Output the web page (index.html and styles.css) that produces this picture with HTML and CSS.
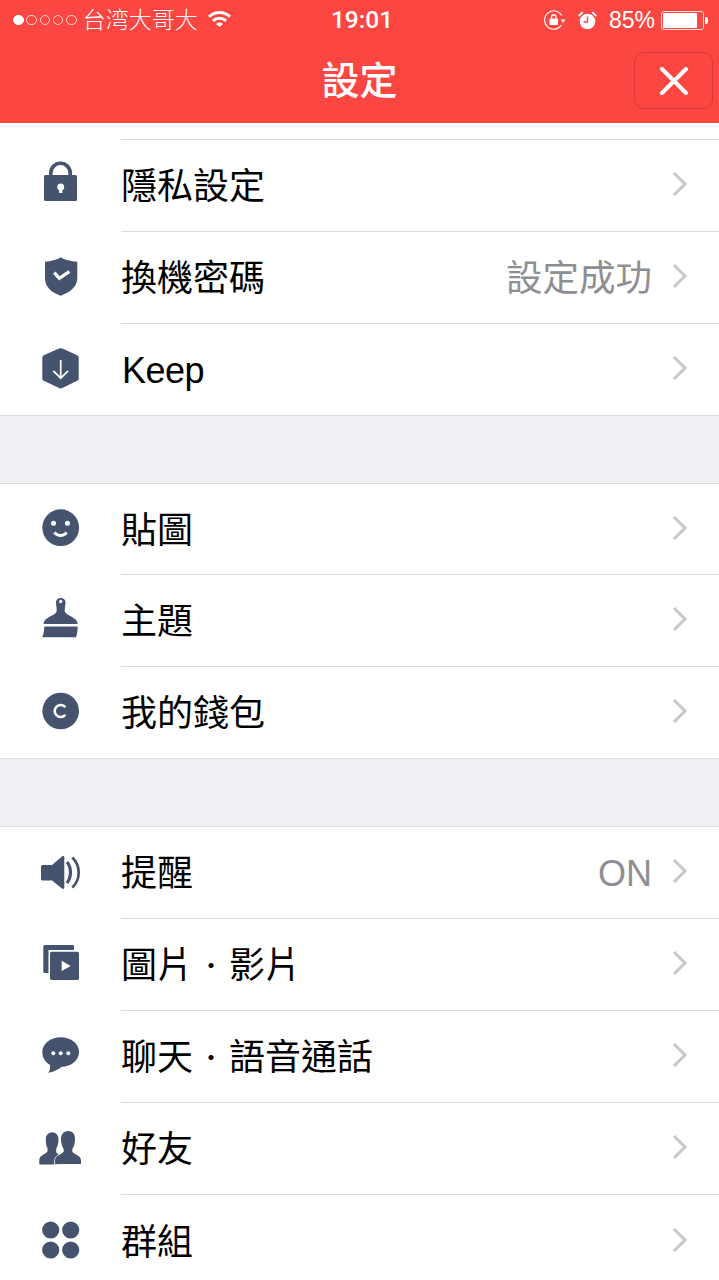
FILE: index.html
```html
<!DOCTYPE html>
<html lang="zh-Hant">
<head>
<meta charset="utf-8">
<title>設定</title>
<link rel="stylesheet" href="styles.css">
</head>
<body>
<div class="app">
  <header class="header">
    <div class="status">
      <div class="status-left">
        <span class="signal"><i class="dot full"></i><i class="dot"></i><i class="dot"></i><i class="dot"></i><i class="dot"></i></span>
        <span class="carrier">台湾大哥大</span>
        <svg class="wifi" viewBox="0 0 23 17"><path d="M0 5.700a16.500 16.500 0 0 1 23 0l-2 2.100a13.600 13.600 0 0 0-19 0zM4 9.800a10.700 10.700 0 0 1 15 0l-2 2.100a7.800 7.800 0 0 0-11 0zM8 13.900a5 5 0 0 1 7 0L11.500 17z" fill="#fff"/></svg>
      </div>
      <div class="time">19:01</div>
      <div class="status-right">
        <svg class="rot" viewBox="0 0 22 20"><path d="M17.800 5.500A9.200 9.200 0 1 0 17.500 15" fill="none" stroke="#fff" stroke-width="1.100"/><path d="M16.600 9.500h5L19.100 13z" fill="#fff"/><rect x="5.500" y="8.500" width="8.500" height="6.500" rx="1" fill="#fff"/><path d="M7.500 8.500V7a2.200 2.200 0 0 1 4.500 0v1.500" fill="none" stroke="#fff" stroke-width="1.300"/></svg>
        <svg class="alarm" viewBox="0 0 19 19"><circle cx="9.500" cy="10.500" r="7.800" fill="#fff"/><path d="M0 4.500L4 .5l1.500 1.200-4 4zM19 4.500l-4-4-1.500 1.200 4 4z" fill="#fff"/><path d="M9.500 5.500v5.500H5.500" fill="none" stroke="#fc4642" stroke-width="1.400"/></svg>
        <span class="pct">85%</span>
        <span class="battery"><span class="battery-fill"></span></span><span class="battery-tip"></span>
      </div>
    </div>
    <div class="nav">
      <h1 class="title">設定</h1>
      <button class="close" aria-label="關閉">
        <svg viewBox="0 0 30 30"><path d="M3 3l24 24M27 3L3 27" stroke="#fff" stroke-width="4" stroke-linecap="round"/></svg>
      </button>
    </div>
  </header>

  <main class="list">
    <div class="sliver"></div>
    <section class="group">
      <a class="row"><span class="icon"><svg viewBox="0 0 44 44"><path d="M11 13.500V11a11.500 11.500 0 0 1 23 0v2.500h-3.600V11a7.900 7.900 0 0 0-15.800 0v2.500z" fill="#46536f"/><path d="M7.500 13h30A1.500 1.500 0 0 1 39 14.500v23a1.500 1.500 0 0 1-1.500 1.500h-30A1.500 1.500 0 0 1 6 37.500v-23A1.500 1.500 0 0 1 7.500 13z" fill="#46536f"/><circle cx="22.700" cy="25" r="3.500" fill="#fff"/><path d="M21.400 26h2.600l.5 5h-3.600z" fill="#fff"/></svg></span><span class="body"><span class="label">隱私設定</span><svg class="chev" viewBox="0 0 16 26"><path d="M2 2l11 11L2 24" fill="none" stroke="#c7c7cc" stroke-width="3"/></svg></span></a>
      <a class="row"><span class="icon"><svg viewBox="0 0 44 44"><path d="M22.700 3.300C26.500 5.800 33 7.500 39.300 7.700V24c0 8.500-7 14.500-16.600 17.700C13 38.500 7 32.500 7 24V7.700C12.500 7.500 18.900 5.800 22.700 3.300z" fill="#46536f"/><path d="M16.300 18.700l5 5.600 10-6.600" fill="none" stroke="#fff" stroke-width="3.300"/></svg></span><span class="body"><span class="label">換機密碼</span><span class="value">設定成功</span><svg class="chev" viewBox="0 0 16 26"><path d="M2 2l11 11L2 24" fill="none" stroke="#c7c7cc" stroke-width="3"/></svg></span></a>
      <a class="row last"><span class="icon"><svg viewBox="0 0 44 44"><path d="M21 2.600a3.500 3.500 0 0 1 3.400 0l14.800 6.600c1 .5 1.500 1.300 1.500 2.400v20.800c0 1.100-.5 1.900-1.500 2.400L24.400 42a3.500 3.500 0 0 1-3.400 0L5.800 34.800c-1-.5-1.500-1.300-1.500-2.400V11.600c0-1.100.5-1.900 1.500-2.400z" fill="#46536f"/><path d="M22.700 14v18M15.300 24.800l7.400 7.400 7.400-7.400" fill="none" stroke="#fff" stroke-width="1.700"/></svg></span><span class="body"><span class="label latin">Keep</span><svg class="chev" viewBox="0 0 16 26"><path d="M2 2l11 11L2 24" fill="none" stroke="#c7c7cc" stroke-width="3"/></svg></span></a>
    </section>
    <div class="gap"></div>
    <section class="group tight">
      <a class="row"><span class="icon"><svg viewBox="0 0 44 44"><circle cx="22.700" cy="21.700" r="18.400" fill="#46536f"/><circle cx="15.500" cy="17.300" r="2.500" fill="#fff"/><circle cx="29.500" cy="17.300" r="2.500" fill="#fff"/><path d="M16.300 26.500c3.500 4 9 4 12.400 0" fill="none" stroke="#fff" stroke-width="2.800"/></svg></span><span class="body"><span class="label">貼圖</span><svg class="chev" viewBox="0 0 16 26"><path d="M2 2l11 11L2 24" fill="none" stroke="#c7c7cc" stroke-width="3"/></svg></span></a>
      <a class="row"><span class="icon"><svg viewBox="0 0 44 44"><path d="M18 5a4.800 4.800 0 0 1 9.500 0c0 3.500-.8 5-.8 8.500 0 5.500 13 6 13 13.500H5.700c0-7.500 13-8 13-13.500 0-3.500-.7-5-.7-8.500z" fill="#46536f"/><circle cx="22.700" cy="4.500" r="1.700" fill="#fff"/><path d="M6.300 29.500h33.400c0 4-.5 7.500-1.700 11-1-.3-2-.3-3-.3H4.300c1.200-3.300 2-7 2-10.700z" fill="#46536f"/></svg></span><span class="body"><span class="label">主題</span><svg class="chev" viewBox="0 0 16 26"><path d="M2 2l11 11L2 24" fill="none" stroke="#c7c7cc" stroke-width="3"/></svg></span></a>
      <a class="row last"><span class="icon"><svg viewBox="0 0 44 44"><circle cx="22.700" cy="22" r="18.300" fill="#46536f"/><path d="M27.400 18.300a6 6 0 1 0 0 7.400" fill="none" stroke="#fff" stroke-width="2.600"/></svg></span><span class="body"><span class="label">我的錢包</span><svg class="chev" viewBox="0 0 16 26"><path d="M2 2l11 11L2 24" fill="none" stroke="#c7c7cc" stroke-width="3"/></svg></span></a>
    </section>
    <div class="gap"></div>
    <section class="group">
      <a class="row"><span class="icon"><svg viewBox="0 0 44 44"><path d="M3 17.500c0-.8.700-1.500 1.500-1.500H14L24 7.500c1-.8 2.300-.3 2.300 1v30c0 1.300-1.300 1.800-2.300 1L14 31.500H4.500c-.8 0-1.500-.7-1.500-1.500z" fill="#46536f"/><path d="M29 13c4.600 5.500 4.600 15 0 21" fill="none" stroke="#46536f" stroke-width="3.200"/><path d="M34.300 8.500c8.500 8 8.500 22 0 30" fill="none" stroke="#46536f" stroke-width="2.700"/></svg></span><span class="body"><span class="label">提醒</span><span class="value latin">ON</span><svg class="chev" viewBox="0 0 16 26"><path d="M2 2l11 11L2 24" fill="none" stroke="#c7c7cc" stroke-width="3"/></svg></span></a>
      <a class="row"><span class="icon"><svg viewBox="0 0 44 44"><path d="M6.800 4H34.500c1 0 1.500.5 1.500 1.500V9H10.500v23H6.800a1.500 1.500 0 0 1-1.500-1.500v-25A1.500 1.500 0 0 1 6.800 4z" fill="#46536f"/><rect x="12" y="10.700" width="29" height="28.300" rx="1.800" fill="#46536f"/><path d="M23.700 19.700l9 5.200-9 5.200z" fill="#fff"/></svg></span><span class="body"><span class="label">圖片<span class="mid">・</span>影片</span><svg class="chev" viewBox="0 0 16 26"><path d="M2 2l11 11L2 24" fill="none" stroke="#c7c7cc" stroke-width="3"/></svg></span></a>
      <a class="row"><span class="icon"><svg viewBox="0 0 44 44"><path d="M22.700 4.300c10.300 0 18.400 6.500 18.400 14.700S33 33.700 24 33.700c-4 3-8.500 5.300-13.700 6 1.500-2 2-4.200 1.800-7.700C7 29 4.300 24.500 4.300 19c0-8.200 8.100-14.700 18.400-14.700z" fill="#46536f"/><circle cx="15.300" cy="20.300" r="2" fill="#fff"/><circle cx="22.700" cy="20.300" r="2" fill="#fff"/><circle cx="30.300" cy="20.300" r="2" fill="#fff"/></svg></span><span class="body"><span class="label">聊天<span class="mid">・</span>語音通話</span><svg class="chev" viewBox="0 0 16 26"><path d="M2 2l11 11L2 24" fill="none" stroke="#c7c7cc" stroke-width="3"/></svg></span></a>
      <a class="row"><span class="icon"><svg viewBox="0 0 44 44"><path d="M14.300 7.300c3.800 0 6.200 3 6.200 6.700 0 4-.8 7.500-2.300 9.500v3.500c1.500 3 4 3 6 5v7.500H1.300v-4.500c0-4.500 5.700-5.500 8.200-8.500v-3.500C8 21 7.800 17.500 7.800 14c0-3.700 2.700-6.700 6.500-6.700z" fill="#46536f"/><path d="M30.300 6c4.200 0 6.700 3 6.700 7.500 0 4-.7 8-2.700 10.500v2.500c2 3.500 8.700 3.500 8.700 9V39H17v-3.500c0-5.500 6.700-5.500 8.700-9V24c-2-2.500-2.700-6.500-2.700-10.500 0-4.500 3.100-7.500 7.300-7.500z" fill="#46536f" stroke="#fff" stroke-width="1.500" paint-order="stroke"/></svg></span><span class="body"><span class="label">好友</span><svg class="chev" viewBox="0 0 16 26"><path d="M2 2l11 11L2 24" fill="none" stroke="#c7c7cc" stroke-width="3"/></svg></span></a>
      <a class="row"><span class="icon"><svg viewBox="0 0 44 44"><circle cx="12.700" cy="13" r="8.600" fill="#46536f"/><circle cx="32.700" cy="13" r="8.600" fill="#46536f"/><circle cx="12.700" cy="33" r="8.600" fill="#46536f"/><circle cx="32.700" cy="33" r="8.600" fill="#46536f"/></svg></span><span class="body"><span class="label">群組</span><svg class="chev" viewBox="0 0 16 26"><path d="M2 2l11 11L2 24" fill="none" stroke="#c7c7cc" stroke-width="3"/></svg></span></a>
    </section>
  </main>
</div>
</body>
</html>
```
FILE: styles.css
```css
* { box-sizing: border-box; }
html, body { margin: 0; padding: 0; }
body {
  width: 719px;
  height: 1280px;
  overflow: hidden;
  background: #fff;
  font-family: "Liberation Sans", "Noto Sans CJK TC", sans-serif;
  color: #000;
}
.app { display: flex; flex-direction: column; height: 1280px; overflow: hidden; }

.header { background: #fb4641; color: #fff; height: 123px; flex: none; display: flex; flex-direction: column; }
.status { height: 40px; padding: 0 11px 0 13px; display: grid; grid-template-columns: 1fr auto 1fr; align-items: center; }
.status-left { display: flex; align-items: center; }
.signal { display: flex; gap: 2.700px; }
.dot { display: block; width: 10.600px; height: 10.600px; border-radius: 50%; border: 1px solid rgba(255,255,255,.75); }
.dot.full { background: #fff; border-color: #fff; }
.carrier { margin-left: 6px; font-size: 23px; line-height: 26px; font-weight: 300; }
.wifi { width: 23px; height: 17px; margin-left: 10px; margin-top: -3px; }
.time { font-family: Roboto, sans-serif; font-size: 24.500px; font-weight: 500; line-height: 28px; margin-left: 3px; }
.status-right { display: flex; align-items: center; justify-content: flex-end; }
.rot { width: 22px; height: 20px; margin-right: 12px; }
.alarm { width: 19px; height: 19px; margin-right: 12px; }
.pct { font-size: 23px; line-height: 28px; margin-right: 6px; }
.battery { display: block; width: 43px; height: 19px; border: 1px solid rgba(255,255,255,.8); border-radius: 3px; padding: 1px; }
.battery-fill { display: block; width: 34px; height: 100%; background: #fff; border-radius: 1px; }
.battery-tip { display: block; width: 3px; height: 7px; background: #fff; border-radius: 0 2px 2px 0; margin-left: 1px; }

.nav { flex: 1; display: flex; align-items: center; justify-content: center; position: relative; }
.title { margin: -2px 0 0; font-size: 38px; line-height: 50px; font-weight: 500; }
.close {
  position: absolute; right: 6px; top: 12px;
  width: 79px; height: 57px; padding: 0;
  display: flex; align-items: center; justify-content: center;
  background: transparent; border: 1px solid rgba(170,40,40,.4); border-radius: 10px;
}
.close svg { width: 30px; height: 30px; }

.list { flex: 1; display: flex; flex-direction: column; }
.sliver { height: 17px; flex: none; display: flex; }
.sliver::after { content: ""; display: block; margin: 16px 0 0 121px; height: 1px; flex: 1; background: #dcdcde; }
.group { display: flex; flex-direction: column; border-bottom: 1px solid #dcdce0; }
.group + .gap + .group { border-top: 1px solid #dcdce0; }
.gap { height: 67px; flex: none; background: #efeff4; }
.row { display: flex; height: 92px; flex: none; }
.row.last { height: 91px; }
.group.tight .row:first-child { height: 91px; }
.icon { width: 121px; flex: none; display: flex; align-items: flex-start; padding: 22px 0 0 38px; }
.icon svg { width: 44px; height: 44px; overflow: visible; }
.body { flex: 1; display: flex; align-items: center; padding-right: 31px; border-bottom: 1px solid #dcdcde; min-width: 0; }
.row.last .body { border-bottom: 0; }
.group:last-child .row:last-child .body { border-bottom: 0; }
.label { flex: 1; font-size: 36px; line-height: 46px; margin-top: 3px; white-space: nowrap; }
.label.latin { letter-spacing: -.5px; padding-left: 1px; }
.mid { display: inline-block; width: 36px; text-align: center; font-size: 24px; vertical-align: 4px; }
.value { font-size: 36.500px; line-height: 46px; color: #8e8e93; margin-right: 20px; margin-top: 3px; white-space: nowrap; }
.value.latin { font-size: 36px; }
.chev { width: 16px; height: 26px; flex: none; margin-top: -3px; }
```
